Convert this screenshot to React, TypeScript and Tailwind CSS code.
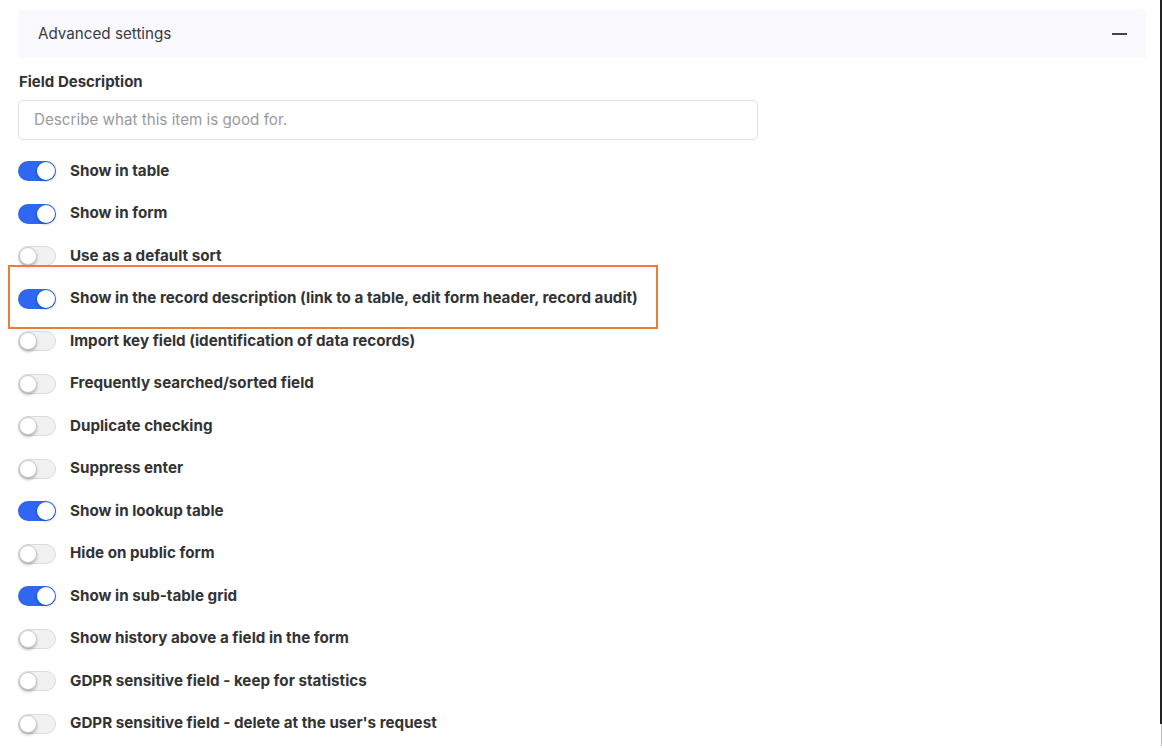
import React from "react";

type Option = {
  label: string;
  on: boolean;
  highlight?: boolean;
};

const options: Option[] = [
  { label: "Show in table", on: true },
  { label: "Show in form", on: true },
  { label: "Use as a default sort", on: false },
  {
    label:
      "Show in the record description (link to a table, edit form header, record audit)",
    on: true,
    highlight: true,
  },
  { label: "Import key field (identification of data records)", on: false },
  { label: "Frequently searched/sorted field", on: false },
  { label: "Duplicate checking", on: false },
  { label: "Suppress enter", on: false },
  { label: "Show in lookup table", on: true },
  { label: "Hide on public form", on: false },
  { label: "Show in sub-table grid", on: true },
  { label: "Show history above a field in the form", on: false },
  { label: "GDPR sensitive field - keep for statistics", on: false },
  { label: "GDPR sensitive field - delete at the user's request", on: false },
];

const Toggle: React.FC<{ on: boolean }> = ({ on }) => (
  <div
    className={
      on
        ? "relative h-[20px] w-[38px] shrink-0 rounded-full bg-[#2f66f2]"
        : "relative h-[20px] w-[38px] shrink-0 rounded-full border border-[#dcdcdc] bg-[#f1f1f1]"
    }
  >
    {/* knob */}
    <div
      className={
        on
          ? "absolute right-[1px] top-[1px] h-[18px] w-[18px] rounded-full bg-white shadow-[0_1px_3px_rgba(0,0,0,0.35)]"
          : "absolute left-[0px] top-[0px] h-[18px] w-[18px] rounded-full border border-[#c9c9c9] bg-white shadow-[0_2px_3px_rgba(0,0,0,0.25)]"
      }
    />
  </div>
);

export default function App() {
  return (
    <div
      className="flex h-[748px] w-[1162px] bg-white text-[#333]"
      style={{ fontFamily: "Inter, 'Noto Sans', sans-serif" }}
    >
      <div className="flex-1 pl-[18px] pr-[12px] pt-[10px]">
        {/* Collapsible header */}
        <div className="flex h-[48px] items-center justify-between bg-[#f9f9fe] pl-[20px] pr-[19px]">
          <span className="text-[15.2px] text-[#3b3b3b]">Advanced settings</span>
          <span className="block h-[2px] w-[15px] bg-[#444]" />
        </div>

        {/* Field description */}
        <div className="mt-[13px] pl-[1px] text-[15px] font-bold text-[#333]">
          Field Description
        </div>
        <div className="mt-[6px] flex h-[40px] w-[740px] items-center rounded-[4px] border border-[#dfe1e3] px-[15px] pt-[1px] text-[15.2px] text-[#9a9a9a]">
          Describe what this item is good for.
        </div>

        {/* Options */}
        <div className="mt-[10.5px] flex flex-col">
          {options.map((o) => (
            <div
              key={o.label}
              className="relative flex h-[42.5px] items-center gap-[14px]"
            >
              <Toggle on={o.on} />
              <span className="text-[15.2px] font-bold text-[#333]">
                {o.label}
              </span>
              {o.highlight ? (
                <div className="pointer-events-none absolute -left-[10px] -top-[13px] h-[64px] w-[650px] border-2 border-[#ed7d31]" />
              ) : null}
            </div>
          ))}
        </div>
      </div>
      {/* window edge */}
      <div className="flex w-[4px] flex-col items-end">
        <div className="h-[724px] w-[2px] bg-[#222]" />
        <div className="h-[22px] w-[1px] bg-[#bbb]" />
      </div>
    </div>
  );
}
